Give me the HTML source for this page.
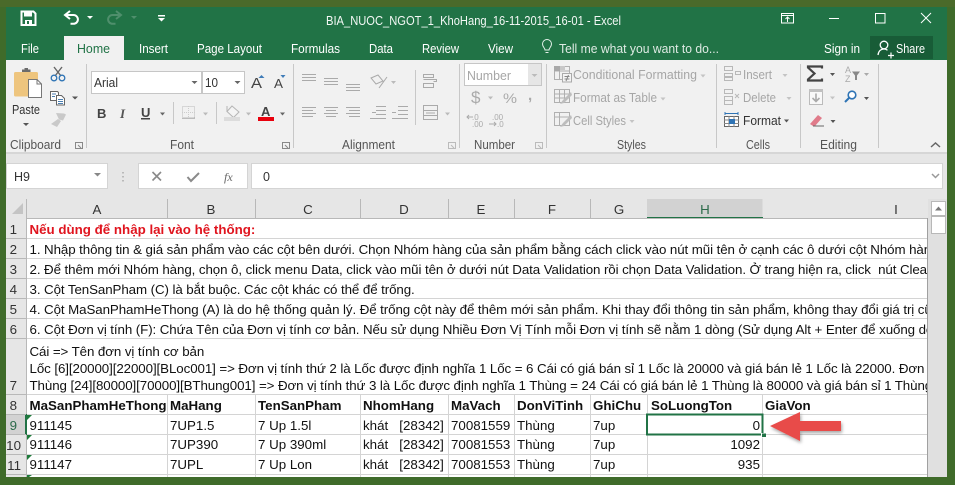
<!DOCTYPE html>
<html><head><meta charset="utf-8">
<style>
html,body{margin:0;padding:0;background:#3f6b2a;width:955px;height:485px;overflow:hidden}
svg{display:block;position:absolute;left:0;top:0}
text{font-family:"Liberation Sans",sans-serif;white-space:pre}
.w{fill:#fff;font-size:12.5px}
.l{fill:#555;font-size:12.5px}
.g{fill:#a6a6a6;font-size:12.5px}
.d{fill:#333;font-size:12.5px}
.c{fill:#111;font-size:13.33px}
.t{letter-spacing:-0.09px}
.b{fill:#111;font-size:13.33px;font-weight:bold}
.h{fill:#333;font-size:13.33px}
</style></head><body>
<svg width="955" height="485" viewBox="0 0 955 485" xmlns="http://www.w3.org/2000/svg">
<defs>
<clipPath id="sheet"><rect x="26" y="218" width="901" height="259"/></clipPath>
<filter id="sh" x="-20%" y="-30%" width="140%" height="170%"><feDropShadow dx="1" dy="2" stdDeviation="1.5" flood-color="#000" flood-opacity=".35"/></filter>
</defs>
<rect width="955" height="485" fill="#3f6b2a"/>
<rect x="0" y="0" width="955" height="7" fill="#4a6a2a"/>
<!-- title bar -->
<rect x="6" y="7" width="941" height="53" fill="#217346"/>
<!-- save -->
<path d="M21.5 11.5h12l2 2v11.5h-14z" fill="none" stroke="#fff" stroke-width="2"/>
<rect x="24" y="12" width="8" height="4.5" fill="#fff"/><rect x="25" y="20" width="7" height="5" fill="#fff"/><rect x="27" y="21" width="2" height="3" fill="#217346"/>
<!-- undo -->
<path d="M66 15h7.500a4.300 4.300 0 0 1 0 8.800h-3" fill="none" stroke="#fff" stroke-width="2"/><path d="M70 11l-5 4 5 4" fill="none" stroke="#fff" stroke-width="2"/>
<path d="M87 16h6l-3 3z" fill="#fff"/>
<!-- redo -->
<path d="M120 15h-7.500a4.300 4.300 0 0 0 0 8.800h3" fill="none" stroke="#4f8f6c" stroke-width="2"/><path d="M116 11l5 4-5 4" fill="none" stroke="#4f8f6c" stroke-width="2"/>
<path d="M131 16h6l-3 3z" fill="#4f8f6c"/>
<!-- qat custom -->
<rect x="158" y="15" width="7" height="1.500" fill="#fff"/><path d="M158 18h7l-3.500 3.500z" fill="#fff"/>
<text class="w" x="326" y="25" textLength="295" lengthAdjust="spacingAndGlyphs" fill-opacity=".95">BIA_NUOC_NGOT_1_KhoHang_16-11-2015_16-01 - Excel</text>
<!-- window controls -->
<rect x="781.500" y="13.500" width="12" height="9.500" fill="none" stroke="#fff"/><path d="M781 15.500h13M787.500 22v-5M785.500 19l2-2 2 2" fill="none" stroke="#fff"/>
<rect x="829" y="18" width="10" height="1" fill="#fff"/>
<rect x="875.500" y="13.500" width="9.500" height="9.500" fill="none" stroke="#fff"/>
<path d="M921 13l10 10M931 13l-10 10" stroke="#fff" fill="none"/>
<!-- tabs -->
<rect x="64" y="36" width="60" height="24" fill="#f1f1f1"/>
<text class="w" x="21" y="53" textLength="18" lengthAdjust="spacingAndGlyphs">File</text>
<text x="77" y="53" style="font-size:12.5px;fill:#217346" textLength="33" lengthAdjust="spacingAndGlyphs">Home</text>
<text class="w" x="139" y="53" textLength="29" lengthAdjust="spacingAndGlyphs">Insert</text>
<text class="w" x="197" y="53" textLength="65" lengthAdjust="spacingAndGlyphs">Page Layout</text>
<text class="w" x="291" y="53" textLength="49" lengthAdjust="spacingAndGlyphs">Formulas</text>
<text class="w" x="369" y="53" textLength="24" lengthAdjust="spacingAndGlyphs">Data</text>
<text class="w" x="422" y="53" textLength="37" lengthAdjust="spacingAndGlyphs">Review</text>
<text class="w" x="488" y="53" textLength="25" lengthAdjust="spacingAndGlyphs">View</text>
<path d="M545 50c0-2-2.500-3-2.500-6a4.500 4.500 0 0 1 9 0c0 3-2.500 4-2.500 6zM545.500 52.500h3" fill="none" stroke="#e4f0e9"/>
<text class="w" x="559" y="53" textLength="160" lengthAdjust="spacingAndGlyphs" fill-opacity=".85">Tell me what you want to do...</text>
<text class="w" x="824" y="53" textLength="36" lengthAdjust="spacingAndGlyphs">Sign in</text>
<rect x="870" y="36" width="63" height="23" fill="#185c37"/>
<circle cx="884" cy="45" r="3.800" fill="none" stroke="#fff" stroke-width="1.300"/><path d="M878 55c.5-4 3-6 6-6 1.500 0 2.500.4 3.500 1.200" fill="none" stroke="#fff" stroke-width="1.300"/><path d="M888 55.500h6M891 52.500v6" stroke="#fff" stroke-width="1.200"/>
<text class="w" x="896" y="53" textLength="29" lengthAdjust="spacingAndGlyphs">Share</text>

<!-- ribbon -->
<rect x="6" y="60" width="941" height="93" fill="#f1f1f1"/>
<rect x="6" y="152" width="941" height="2" fill="#d6d6d6"/>
<rect x="6" y="154" width="941" height="323" fill="#e6e6e6"/>
<!-- separators -->
<g fill="#c8c8c8"><rect x="86" y="64" width="1" height="84"/><rect x="293" y="64" width="1" height="84"/><rect x="459" y="64" width="1" height="84"/><rect x="546" y="64" width="1" height="84"/><rect x="716" y="64" width="1" height="84"/><rect x="800" y="64" width="1" height="84"/><rect x="878" y="64" width="1" height="84"/><rect x="415" y="70" width="1" height="55"/><rect x="173" y="102" width="1" height="22"/><rect x="216" y="102" width="1" height="22"/></g>
<!-- clipboard -->
<rect x="14" y="72" width="24" height="24.500" rx="1.500" fill="#eec57e"/>
<path d="M22 72v-2.500h2.500v-1.500h3.500v1.500h2.500v2.500z" fill="#6b6b6b"/>
<path d="M28.500 79.500h8.500l4.500 4.500v13.500h-13z" fill="#fff" stroke="#777"/>
<path d="M37 79.500v4.500h4.500" fill="none" stroke="#777"/>
<text class="d" x="12" y="114" textLength="28" lengthAdjust="spacingAndGlyphs">Paste</text>
<path d="M23 123h6l-3 3z" fill="#555"/>
<!-- cut -->
<path d="M54 67l7 9M62 67l-7 9" stroke="#666" stroke-width="1.400" fill="none"/>
<circle cx="54" cy="78" r="2.800" fill="none" stroke="#2f74b5" stroke-width="1.300"/><circle cx="62" cy="78" r="2.800" fill="none" stroke="#2f74b5" stroke-width="1.300"/>
<!-- copy -->
<path d="M50.500 91.500h7l1 1v8h-8z" fill="#fff" stroke="#666"/><path d="M56.500 95.500h5l3 3v6.500h-8z" fill="#fff" stroke="#666"/>
<path d="M52 94h4M52 96.500h3M58 99.500h5M58 101.500h5M58 103.500h5" stroke="#4a7eb0"/>
<path d="M72 96.500h6l-3 3z" fill="#555"/>
<!-- painter -->
<path d="M56 113l8 0.500 2 1-3 6-4-1zM51 124l7-5 3 2-4 6z" fill="#c9c9c9"/>
<text class="l" x="10" y="149" textLength="51" lengthAdjust="spacingAndGlyphs">Clipboard</text>
<g fill="none" stroke="#888"><path d="M75.500 142.500h7v6h-7zM78 145l3 3"/><path d="M282.500 142.500h7v6h-7zM285 145l3 3"/></g>
<g fill="none" stroke="#bbb"><path d="M448.500 142.500h7v6h-7zM451 145l3 3"/><path d="M535.500 142.500h7v6h-7zM538 145l3 3"/></g>
<!-- font boxes -->
<rect x="91.500" y="71.500" width="110" height="22" fill="#fff" stroke="#c6c6c6"/>
<rect x="202.500" y="71.500" width="42" height="22" fill="#fff" stroke="#c6c6c6"/>
<text class="d" x="94" y="87" textLength="24" lengthAdjust="spacingAndGlyphs" style="font-size:13px">Arial</text>
<text class="d" x="205" y="87" textLength="13" lengthAdjust="spacingAndGlyphs" style="font-size:13px">10</text>
<path d="M191.500 81h6l-3 3zM234.500 81h6l-3 3z" fill="#666"/>
<text x="251" y="88" style="font-size:15px;fill:#444" textLength="11" lengthAdjust="spacingAndGlyphs">A</text>
<text x="274" y="88" style="font-size:12.500px;fill:#444" textLength="9" lengthAdjust="spacingAndGlyphs">A</text>
<path d="M258.500 78l3-3 3 3z" fill="#3f7cb8"/><path d="M280.500 75h5l-2.500 3z" fill="#3f7cb8"/>
<text x="97" y="118" style="font-size:13px;font-weight:bold;fill:#444">B</text>
<text x="120" y="118" style="font-size:13px;font-style:italic;font-weight:bold;fill:#555;font-family:'Liberation Serif',serif">I</text>
<text x="141" y="117" style="font-size:13px;font-weight:bold;fill:#444">U</text><rect x="141" y="118" width="9" height="1.500" fill="#444"/>
<path d="M160 112.500h5l-2.500 3z" fill="#666"/>
<!-- borders -->
<rect x="182.500" y="106.500" width="12" height="12" fill="none" stroke="#bbb" stroke-dasharray="1 1"/><path d="M182 112.500h13M188.500 106v13" stroke="#ccc" stroke-dasharray="1 1"/><rect x="182" y="117.500" width="13" height="1.500" fill="#bbb"/>
<path d="M203 112.500h5l-2.500 3zM246 112.500h5l-2.500 3z" fill="#bbb"/>
<!-- fill -->
<path d="M232 106l7 6-5.500 5.500-6.500-6z" fill="#f4f4f4" stroke="#b5b5b5"/><path d="M227 106v6" stroke="#b5b5b5"/><rect x="224" y="117" width="16" height="4" fill="#dcdcdc"/>
<!-- font color -->
<text x="261" y="116" style="font-size:13px;font-weight:bold;fill:#444">A</text><rect x="258" y="117" width="16" height="4" fill="#e8000d"/>
<path d="M280 112.500h5l-2.500 3z" fill="#666"/>
<text class="l" x="170" y="149" textLength="24" lengthAdjust="spacingAndGlyphs">Font</text>
<!-- alignment -->
<g stroke="#aaa" fill="none">
<path d="M302 74.500h14M302 77.500h14M302 80.500h14"/>
<path d="M324 78.500h14M324 81.500h14M324 84.500h14"/>
<path d="M346 84.500h14M346 87.500h14M346 90.500h14"/>
<path d="M302 107.500h14M302 110.500h11M302 113.500h14M302 116.500h11"/>
<path d="M324 107.500h14M326 110.500h10M324 113.500h14M326 116.500h10"/>
<path d="M346 107.500h14M349 110.500h11M346 113.500h14M349 116.500h11"/>
<path d="M376 106.500h10M376 110.500h10M376 114.500h10M370 118.500h16"/>
<path d="M398 106.500h10M398 110.500h10M398 114.500h10M392 118.500h16"/>
<path d="M372 112.500h4M392 112.500h4"/>
<path d="M379 88l8-11M371 78l7-3 5 6-7 3z"/>
<path d="M423.500 74.500h10v3h-10zM423.500 83.500h10v4h-10zM423.500 79.500h13v2h-3"/>
<rect x="423.500" y="105.500" width="14" height="14"/><path d="M423 110.500h15M423 115.500h15M426 113h9"/>
</g>
<path d="M391 81h5l-2.500 3zM445 112.500h5l-2.500 3z" fill="#bbb"/>
<text class="l" x="342" y="149" textLength="53" lengthAdjust="spacingAndGlyphs">Alignment</text>
<!-- number -->
<rect x="464.500" y="63.500" width="77" height="22" fill="#fff" stroke="#c6c6c6"/><rect x="528" y="64" width="13" height="21" fill="#e6e6e6"/>
<path d="M531.500 74h6l-3 3z" fill="#bbb"/>
<text class="g" x="467" y="80" textLength="44" lengthAdjust="spacingAndGlyphs" style="font-size:13px">Number</text>
<text x="471" y="103" style="font-size:17px;fill:#aaa">$</text><path d="M488 96.500h5l-2.500 3z" fill="#bbb"/>
<text x="503" y="103" style="font-size:14px;fill:#aaa" textLength="14" lengthAdjust="spacingAndGlyphs">%</text>
<text x="528" y="100" style="font-size:15px;font-weight:bold;fill:#aaa">,</text>
<text x="472" y="120" style="font-size:8px;fill:#aaa">.0</text><text x="472" y="127" style="font-size:8px;fill:#aaa">.00</text><path d="M473 117h-6m2-2l-2 2 2 2" stroke="#aaa" fill="none"/>
<text x="492" y="120" style="font-size:8px;fill:#aaa">.00</text><text x="497" y="127" style="font-size:8px;fill:#aaa">.0</text><path d="M489 124h7m-2-2l2 2-2 2" stroke="#aaa" fill="none"/>
<text class="l" x="474" y="149" textLength="41" lengthAdjust="spacingAndGlyphs">Number</text>
<!-- styles -->
<g fill="none" stroke="#b0b0b0">
<rect x="554.500" y="66.500" width="15" height="13"/><path d="M554 71h15M559.500 66v13"/>
<rect x="554.500" y="89.500" width="15" height="13"/><path d="M554 94h15M554 98h15M559.500 89v13M564.500 89v13"/>
<rect x="554.500" y="112.500" width="15" height="13"/><path d="M554 117h15M559.500 112v13"/>
</g>
<rect x="554" y="66" width="6" height="5" fill="#a8a8a8"/><rect x="560" y="66" width="5" height="4" fill="#c8c8c8"/>
<rect x="562.500" y="73.500" width="9" height="8.500" fill="#f4f4f4" stroke="#aaa"/><path d="M564.500 76.500h5M564.500 79h5M568.500 75l-2.500 6" stroke="#888" fill="none"/>
<path d="M571 92l-8 8-3 4 4-1 8-8zM571 115l-8 8-3 4 4-1 8-8z" fill="#bdbdbd"/>
<text class="g" x="573" y="79" textLength="124" lengthAdjust="spacingAndGlyphs">Conditional Formatting</text>
<path d="M700.500 74.500h5l-2.500 3z" fill="#c4c4c4"/>
<text class="g" x="573" y="102" textLength="84" lengthAdjust="spacingAndGlyphs">Format as Table</text>
<path d="M660.500 97.500h5l-2.500 3z" fill="#c4c4c4"/>
<text class="g" x="573" y="125" textLength="53" lengthAdjust="spacingAndGlyphs">Cell Styles</text>
<path d="M629.500 120h5l-2.500 3z" fill="#c4c4c4"/>
<text class="l" x="617" y="149" textLength="29" lengthAdjust="spacingAndGlyphs">Styles</text>
<!-- cells -->
<g fill="none" stroke="#b8b8b8">
<path d="M724.500 66.500h8v4h-8zM724.500 73.500h8v4h-8zM724.500 76.500h8v4h-8zM735.500 71.500h5v3h-5z"/>
<path d="M724.500 89.500h8v4h-8zM724.500 96.500h8v4h-8zM724.500 100.500h8v4h-8zM735 94l4 4M739 94l-4 4"/>
</g>
<text class="g" x="743" y="79" textLength="29" lengthAdjust="spacingAndGlyphs">Insert</text>
<text class="g" x="743" y="102" textLength="33" lengthAdjust="spacingAndGlyphs">Delete</text>
<text class="d" x="743" y="125" textLength="38" lengthAdjust="spacingAndGlyphs">Format</text>
<path d="M782.500 74h5l-2.500 3zM786.500 97h5l-2.500 3z" fill="#c4c4c4"/><path d="M784 119.500h5l-2.500 3z" fill="#555"/>
<rect x="724.500" y="116.500" width="14" height="10" fill="#fff" stroke="#666"/><path d="M724 120h15M724 123.500h15M729 116v11M734 116v11" stroke="#888"/><rect x="729" y="119" width="6" height="5" fill="#2f74b5"/><path d="M725 113.500h13M725 112v3M738 112v3" stroke="#2f74b5" fill="none"/>
<text class="l" x="746" y="149" textLength="24" lengthAdjust="spacingAndGlyphs">Cells</text>
<!-- editing -->
<path d="M822 68.500v-2h-14v1l6.500 6-6.500 6v1h14v-2" fill="none" stroke="#444" stroke-width="2.200"/>
<path d="M830 73h5l-2.500 3zM864 97h5l-2.500 3zM830.500 120h5l-2.500 3z" fill="#555"/><path d="M864 73h5l-2.500 3z" fill="#555" opacity=".45"/>
<text x="845" y="73" style="font-size:9px;fill:#aaa">A</text><text x="845" y="82" style="font-size:9px;fill:#aaa">Z</text>
<path d="M852 71.500h8l-3 4v4.500h-2v-4.500z" fill="#888"/>
<rect x="809.500" y="89.500" width="13" height="15" fill="#f8f8f8" stroke="#bbb"/><rect x="809" y="89" width="14" height="3" fill="#c0c0c0"/><path d="M816 93.500v8m-3.500-3.500l3.500 3.500 3.500-3.500" stroke="#aaa" stroke-width="1.600" fill="none"/>
<path d="M830 96.500h5l-2.500 3z" fill="#c4c4c4"/>
<circle cx="852" cy="95" r="3.800" fill="#fff" stroke="#2f74b5" stroke-width="1.600"/><path d="M849 98l-4 4" stroke="#2f74b5" stroke-width="2"/>
<path d="M810 124l8-9 4 3-7 8h-2z" fill="#e07b8a"/><path d="M813 126h11" stroke="#666"/>
<text class="l" x="820" y="149" textLength="37" lengthAdjust="spacingAndGlyphs">Editing</text>
<path d="M931 147l4.500-4 4.500 4" fill="none" stroke="#666" stroke-width="1.500"/>

<!-- formula bar -->
<rect x="6.500" y="163.500" width="101" height="25" fill="#fff" stroke="#d4d4d4"/>
<text x="14" y="181" style="font-size:12.500px;fill:#333">H9</text>
<path d="M94 173h7l-3.500 3.500z" fill="#888"/>
<path d="M123 172v1.500M123 176v1.500M123 180v1.500" stroke="#aaa" stroke-width="1.500"/>
<rect x="138.500" y="163.500" width="109" height="25" fill="#fff" stroke="#d4d4d4"/>
<path d="M152.500 172l8.500 8.500M161 172l-8.500 8.500" stroke="#8a8a8a" stroke-width="1.600"/>
<path d="M187.500 177l3.500 4 8-8" stroke="#8a8a8a" stroke-width="2" fill="none"/>
<text x="224" y="181" style="font-size:12px;font-style:italic;fill:#666;font-family:'Liberation Serif',serif">fx</text>
<rect x="251.500" y="163.500" width="691" height="25" fill="#fff" stroke="#d4d4d4"/>
<text x="263" y="181" style="font-size:12.500px;fill:#333">0</text>
<path d="M932 174l3.500 3.500 3.500-3.500" stroke="#999" stroke-width="1.500" fill="none"/>

<!-- column header -->
<rect x="6" y="199" width="921" height="19" fill="#e6e6e6"/>
<path d="M23 203v11h-11z" fill="#c4c4c4"/>
<rect x="647" y="199" width="115.500" height="19" fill="#d2d2d2"/>
<rect x="647" y="217" width="116" height="2" fill="#217346"/>
<g fill="#b8b8b8">
<rect x="26" y="199" width="1" height="19"/><rect x="167" y="199" width="1" height="19"/><rect x="255" y="199" width="1" height="19"/><rect x="360" y="199" width="1" height="19"/><rect x="448" y="199" width="1" height="19"/><rect x="514" y="199" width="1" height="19"/><rect x="590" y="199" width="1" height="19"/></g>
<g class="h" style="font-size:13.330px;fill:#333;" text-anchor="middle">
<text x="97" y="214">A</text><text x="211" y="214">B</text><text x="308" y="214">C</text><text x="404" y="214">D</text><text x="481" y="214">E</text><text x="552" y="214">F</text><text x="619" y="214">G</text><text x="705" y="214" fill="#2c6a4a">H</text><text x="896" y="214">I</text>
</g>
<!-- sheet -->
<rect x="26" y="218" width="901" height="259" fill="#fff"/>
<rect x="26" y="218" width="901" height="1" fill="#b8b8b8"/>
<g fill="#d4d4d4">
<rect x="26" y="238" width="901" height="1"/><rect x="26" y="258" width="901" height="1"/><rect x="26" y="278" width="901" height="1"/><rect x="26" y="298" width="901" height="1"/><rect x="26" y="318" width="901" height="1"/><rect x="26" y="338" width="901" height="1"/><rect x="26" y="394" width="901" height="1"/><rect x="26" y="414" width="901" height="1"/><rect x="26" y="434" width="901" height="1"/><rect x="26" y="454" width="901" height="1"/><rect x="26" y="474" width="901" height="1"/>
<rect x="167" y="394" width="1" height="83"/><rect x="255" y="394" width="1" height="83"/><rect x="360" y="394" width="1" height="83"/><rect x="448" y="394" width="1" height="83"/><rect x="514" y="394" width="1" height="83"/><rect x="590" y="394" width="1" height="83"/><rect x="647" y="394" width="1" height="83"/><rect x="762" y="394" width="1" height="83"/>
</g>
<rect x="26" y="218" width="1" height="259" fill="#b8b8b8"/>
<rect x="927" y="218" width="1" height="259" fill="#a0a0a0"/>
<!-- row headers -->
<rect x="6" y="414" width="20" height="21" fill="#d2d2d2"/><rect x="25" y="414" width="2" height="21" fill="#217346"/>
<g fill="#b8b8b8"><rect x="6" y="238" width="20" height="1"/><rect x="6" y="258" width="20" height="1"/><rect x="6" y="278" width="20" height="1"/><rect x="6" y="298" width="20" height="1"/><rect x="6" y="318" width="20" height="1"/><rect x="6" y="338" width="20" height="1"/><rect x="6" y="394" width="20" height="1"/><rect x="6" y="414" width="20" height="1"/><rect x="6" y="434" width="20" height="1"/><rect x="6" y="454" width="20" height="1"/><rect x="6" y="474" width="20" height="1"/></g>
<g text-anchor="end" style="font-size:13.330px;fill:#333">
<text x="17" y="234">1</text><text x="17" y="254">2</text><text x="17" y="274">3</text><text x="17" y="294">4</text><text x="17" y="314">5</text><text x="17" y="334">6</text><text x="17" y="390">7</text><text x="17" y="410">8</text><text x="17" y="430" fill="#2c6a4a">9</text><text x="21" y="450">10</text><text x="21" y="470">11</text>
</g>
<!-- cells -->
<g clip-path="url(#sheet)">
<text x="29.500" y="234" style="font-size:13.330px;font-weight:bold;fill:#e0141e">Nếu dùng để nhập lại vào hệ thống:</text>
<text class="c t" x="29.500" y="254">1. Nhập thông tin &amp; giá sản phẩm vào các cột bên dưới. Chọn Nhóm hàng của sản phẩm bằng cách click vào nút mũi tên ở cạnh các ô dưới cột Nhóm hàng</text>
<text class="c t" x="29.500" y="274">2. Để thêm mới Nhóm hàng, chọn ô, click menu Data, click vào mũi tên ở dưới nút Data Validation rồi chọn Data Validation. Ở trang hiện ra, click  nút Clear</text>
<text class="c t" x="29.500" y="294">3. Cột TenSanPham (C) là bắt buộc. Các cột khác có thể để trống.</text>
<text class="c t" x="29.500" y="314">4. Cột MaSanPhamHeThong (A) là do hệ thống quản lý. Để trống cột này để thêm mới sản phẩm. Khi thay đổi thông tin sản phẩm, không thay đổi giá trị cũa</text>
<text class="c t" x="29.500" y="334">6. Cột Đơn vị tính (F): Chứa Tên của Đơn vị tính cơ bản. Nếu sử dụng Nhiều Đơn Vị Tính mỗi Đơn vị tính sẽ nằm 1 dòng (Sử dụng Alt + Enter để xuống dòng)</text>
<text class="c t" x="29.500" y="356">Cái =&gt; Tên đơn vị tính cơ bản</text>
<text class="c t" x="29.500" y="373">Lốc [6][20000][22000][BLoc001] =&gt; Đơn vị tính thứ 2 là Lốc được định nghĩa 1 Lốc = 6 Cái có giá bán sỉ 1 Lốc là 20000 và giá bán lẻ 1 Lốc là 22000. Đơn vị</text>
<text class="c t" x="29.500" y="390">Thùng [24][80000][70000][BThung001] =&gt; Đơn vị tính thứ 3 là Lốc được định nghĩa 1 Thùng = 24 Cái có giá bán lẻ 1 Thùng là 80000 và giá bán sỉ 1 Thùng là</text>
<text class="b" x="29.500" y="410">MaSanPhamHeThong</text><text class="b" x="170" y="410">MaHang</text><text class="b" x="258" y="410">TenSanPham</text><text class="b" x="363" y="410">NhomHang</text><text class="b" x="451" y="410">MaVach</text><text class="b" x="517" y="410">DonViTinh</text><text class="b" x="593" y="410">GhiChu</text><text class="b" x="651" y="410">SoLuongTon</text><text class="b" x="765" y="410">GiaVon</text>
<text class="c" x="29.500" y="430">911145</text><text class="c" x="170" y="430">7UP1.5</text><text class="c" x="258" y="430">7 Up 1.5l</text><text class="c" x="363" y="430">khát   [28342]</text><text class="c" x="451" y="430">70081559</text><text class="c" x="517" y="430">Thùng</text><text class="c" x="593" y="430">7up</text><text class="c" x="760" y="430" text-anchor="end">0</text>
<text class="c" x="29.500" y="449">911146</text><text class="c" x="170" y="449">7UP390</text><text class="c" x="258" y="449">7 Up 390ml</text><text class="c" x="363" y="449">khát   [28342]</text><text class="c" x="451" y="449">70081553</text><text class="c" x="517" y="449">Thùng</text><text class="c" x="593" y="449">7up</text><text class="c" x="760" y="449" text-anchor="end">1092</text>
<text class="c" x="29.500" y="469">911147</text><text class="c" x="170" y="469">7UPL</text><text class="c" x="258" y="469">7 Up Lon</text><text class="c" x="363" y="469">khát   [28342]</text><text class="c" x="451" y="469">70081553</text><text class="c" x="517" y="469">Thùng</text><text class="c" x="593" y="469">7up</text><text class="c" x="760" y="469" text-anchor="end">935</text>
</g>
<!-- green triangles -->
<path d="M27 415h5l-5 5zM27 435h5l-5 5zM27 455h5l-5 5zM27 475h5l-3 2h-2z" fill="#1e7a3a"/>
<!-- selection -->
<rect x="647" y="414.500" width="115.500" height="20" fill="none" stroke="#217346" stroke-width="2"/>
<rect x="761" y="433" width="5" height="4.500" fill="#fff"/><rect x="762" y="433.500" width="4" height="3.500" fill="#217346"/>
<!-- arrow -->
<path d="M770 426l30-14v9h41v10h-41v10z" fill="#e84c4a" filter="url(#sh)"/>
<!-- scrollbar -->
<rect x="928" y="199" width="19" height="278" fill="#e0e0e0"/>
<rect x="931.500" y="201.500" width="14" height="14" fill="#fff" stroke="#b8b8b8"/><path d="M935 210.500l3.500-4 3.500 4z" fill="#777"/>
<rect x="931.500" y="216.500" width="14" height="17" fill="#fff" stroke="#b8b8b8"/>
</svg>
</body></html>
